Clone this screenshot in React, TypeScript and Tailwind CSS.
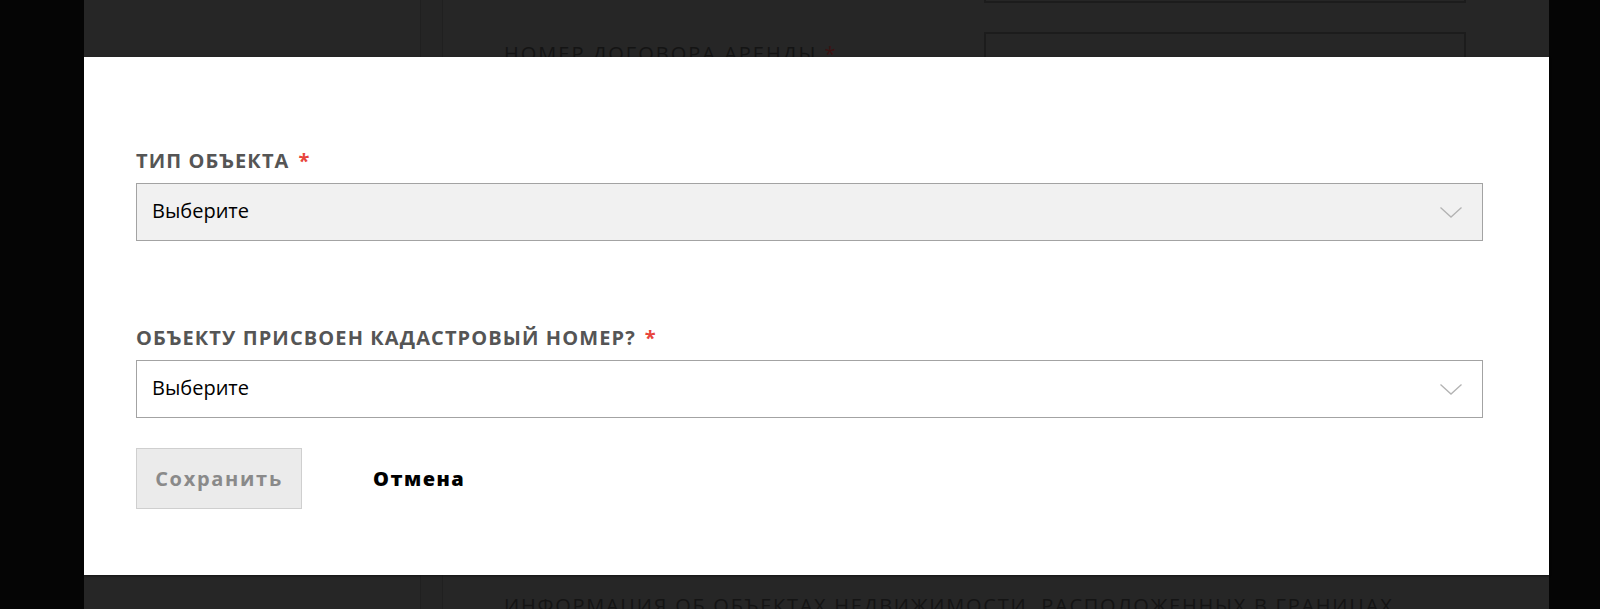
import React from "react";

const font = { fontFamily: '"Open Sans", "Liberation Sans", sans-serif' };

function Chevron() {
  return (
    <svg width="22" height="11" viewBox="0 0 22 11" fill="none" className="shrink-0">
      <path d="M0.5 0.5 L11 10 L21.5 0.5" stroke="#b3b3b3" strokeWidth="1.3" />
    </svg>
  );
}

function Field({ label, filled }: { label: string; filled?: boolean }) {
  return (
    <div className="flex flex-col">
      <div className="flex items-center h-[24px] text-[20px] font-bold text-[#555555] tracking-[1.1px] leading-[24px]">
        <span>{label}</span>
        <span className="ml-[9px] text-[#e8453c] text-[20px]">*</span>
      </div>
      <div
        className={
          "mt-[10px] h-[58px] border border-[#a3a3a3] flex items-center justify-between pl-[15px] pr-[20px] " +
          (filled ? "bg-[#f1f1f1]" : "bg-white")
        }
      >
        <span className="text-[20px] text-black pb-[3px]">Выберите</span>
        <Chevron />
      </div>
    </div>
  );
}

export default function App() {
  return (
    <div className="relative w-[1600px] h-[609px] overflow-hidden flex bg-[#050505]" style={font}>
      <div className="w-[84px] shrink-0 bg-[#050505]" />
      <div className="flex-1 bg-[#262626] flex">
        <div className="w-[336px] shrink-0" />
        <div className="w-[23px] shrink-0 border-l border-r border-[#202020] bg-[#252525]" />
        <div className="flex-1 flex flex-col pl-[61px]">
          <div className="flex h-[575px] shrink-0">
            <div className="w-[480px] shrink-0 pt-[40px] text-[20px] leading-[27px] tracking-[2px] text-[#141414] uppercase whitespace-nowrap">
              Номер договора аренды <span className="text-[#3a1212]">*</span>
            </div>
            <div className="w-[482px] shrink-0 flex flex-col">
              <div className="-mt-[55px] h-[58px] shrink-0 border-2 border-[#1c1c1c]" />
              <div className="mt-[29px] h-[58px] shrink-0 border-2 border-[#1c1c1c] pl-[16px] pt-[18px] text-[18px] text-[#141414] uppercase">
                Выберите
              </div>
            </div>
          </div>
          <div className="shrink-0 pt-[17px] text-[20px] tracking-[1.75px] text-[#141414] uppercase whitespace-nowrap leading-[28px]">
            Информация об объектах недвижимости, расположенных в границах
          </div>
        </div>
      </div>
      <div className="w-[51px] shrink-0 bg-[#050505]" />

      <div className="absolute left-[84px] top-[57px] w-[1465px] h-[518px] bg-white shadow-[0_1px_2px_rgba(0,0,0,0.5)] pl-[52px] pr-[66px] pt-[92px]">
        <Field label="ТИП ОБЪЕКТА" filled />
        <div className="mt-[85px]">
          <Field label="ОБЪЕКТУ ПРИСВОЕН КАДАСТРОВЫЙ НОМЕР?" />
        </div>
        <div className="mt-[30px] flex items-center">
          <button className="w-[166px] h-[61px] bg-[#ebebeb] border border-[#cfcfcf] text-[20px] tracking-[1.7px] font-bold text-[#8a8a8a]">
            Сохранить
          </button>
          <button className="ml-[71px] text-[20px] tracking-[1.5px] font-extrabold text-black">Отмена</button>
        </div>
      </div>
    </div>
  );
}
